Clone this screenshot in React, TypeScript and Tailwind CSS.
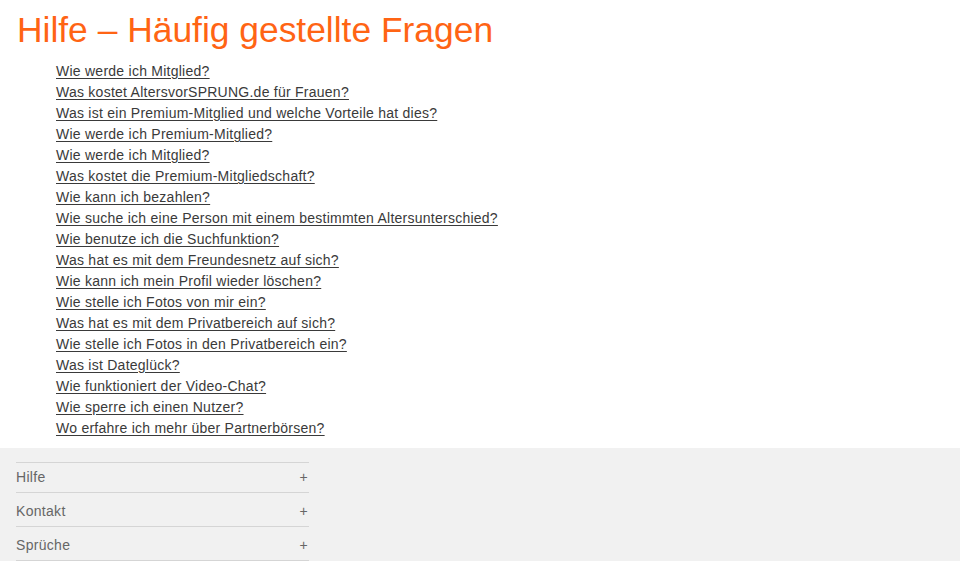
import React from 'react';

const questions = [
  'Wie werde ich Mitglied?',
  'Was kostet AltersvorSPRUNG.de für Frauen?',
  'Was ist ein Premium-Mitglied und welche Vorteile hat dies?',
  'Wie werde ich Premium-Mitglied?',
  'Wie werde ich Mitglied?',
  'Was kostet die Premium-Mitgliedschaft?',
  'Wie kann ich bezahlen?',
  'Wie suche ich eine Person mit einem bestimmten Altersunterschied?',
  'Wie benutze ich die Suchfunktion?',
  'Was hat es mit dem Freundesnetz auf sich?',
  'Wie kann ich mein Profil wieder löschen?',
  'Wie stelle ich Fotos von mir ein?',
  'Was hat es mit dem Privatbereich auf sich?',
  'Wie stelle ich Fotos in den Privatbereich ein?',
  'Was ist Dateglück?',
  'Wie funktioniert der Video-Chat?',
  'Wie sperre ich einen Nutzer?',
  'Wo erfahre ich mehr über Partnerbörsen?',
];

const footerItems = ['Hilfe', 'Kontakt', 'Sprüche'];

export default function App() {
  return (
    <div className="min-h-[561px] bg-[#f1f1f1] font-['Liberation_Sans',Arial,sans-serif]">
      <div className="bg-white pb-[9px]">
        <h1 className="pt-[10px] pl-[17px] text-[35.4px] leading-[41px] text-[#ff6414]">
          Hilfe – Häufig gestellte Fragen
        </h1>
        <ul className="mt-[10px] pl-14">
          {questions.map((q, i) => (
            <li key={i} className="text-[14px] leading-[21px] tracking-[0.25px]">
              <a href="#" className="text-[#3a3a3a] underline underline-offset-[2px]">
                {q}
              </a>
            </li>
          ))}
        </ul>
      </div>

      <div className="pt-[14px] pl-4">
        <div className="w-[293px] border-t border-[#d5d5d5]">
          {footerItems.map((item, i) => (
            <div
              key={item}
              className={`flex items-center justify-between border-b border-[#d5d5d5] text-[14px] tracking-[0.3px] text-[#666] ${
                i === 0 ? 'h-[30px]' : 'h-[34px] pt-1'
              }`}
            >
              <span>{item}</span>
              <span className="pr-[1px] text-[14px]">+</span>
            </div>
          ))}
        </div>
      </div>
    </div>
  );
}
